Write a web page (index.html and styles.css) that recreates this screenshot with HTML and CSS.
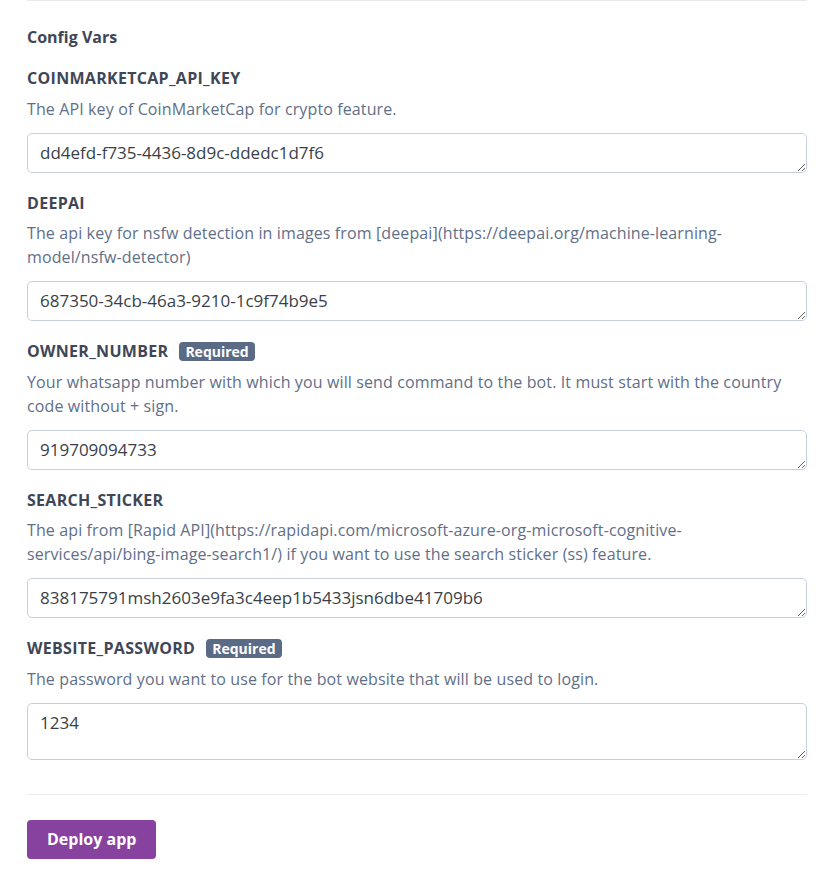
FILE: index.html
```html
<!DOCTYPE html>
<html>
<head>
<meta charset="utf-8">
<link rel="stylesheet" href="styles.css">
</head>
<body>
<div class="page">
  <div class="top-rule"></div>
  <h2 class="section-title">Config Vars</h2>

  <div class="field">
    <div class="label-row"><span class="label">COINMARKETCAP_API_KEY</span></div>
    <p class="desc">The API key of CoinMarketCap for crypto feature.</p>
    <textarea class="input">dd4efd-f735-4436-8d9c-ddedc1d7f6</textarea>
  </div>

  <div class="field">
    <div class="label-row"><span class="label">DEEPAI</span></div>
    <p class="desc">The api key for nsfw detection in images from [deepai](https://deepai.org/machine-learning-model/nsfw-detector)</p>
    <textarea class="input">687350-34cb-46a3-9210-1c9f74b9e5</textarea>
  </div>

  <div class="field">
    <div class="label-row"><span class="label">OWNER_NUMBER</span><span class="badge">Required</span></div>
    <p class="desc">Your whatsapp number with which you will send command to the bot. It must start with the country code without + sign.</p>
    <textarea class="input">919709094733</textarea>
  </div>

  <div class="field">
    <div class="label-row"><span class="label">SEARCH_STICKER</span></div>
    <p class="desc">The api from [Rapid API](https://rapidapi.com/microsoft-azure-org-microsoft-cognitive-services/api/bing-image-search1/) if you want to use the search sticker (ss) feature.</p>
    <textarea class="input">838175791msh2603e9fa3c4eep1b5433jsn6dbe41709b6</textarea>
  </div>

  <div class="field">
    <div class="label-row"><span class="label">WEBSITE_PASSWORD</span><span class="badge">Required</span></div>
    <p class="desc">The password you want to use for the bot website that will be used to login.</p>
    <textarea class="input tall">1234</textarea>
  </div>

  <div class="bottom-rule"></div>
  <button class="deploy">Deploy app</button>
</div>
</body>
</html>
```

FILE: styles.css
```css
* { box-sizing: border-box; }
html, body {
  margin: 0;
  padding: 0;
  background: #ffffff;
}
body {
  font-family: "Open Sans", Lato, sans-serif;
  color: #3f4756;
}
.page {
  width: 780px;
  margin-left: 27px;
  display: flex;
  flex-direction: column;
}
.top-rule {
  height: 1px;
  background: #e6eaf0;
}
.section-title {
  margin: 24px 0 0 0;
  font-size: 16px;
  line-height: 24px;
  font-weight: 700;
  color: #3f4756;
}
.field {
  display: flex;
  flex-direction: column;
  margin-top: 17px;
}
.field + .field { margin-top: 18px; }
.label-row {
  display: flex;
  align-items: center;
  gap: 11px;
  height: 24px;
}
.label {
  font-size: 16px;
  font-weight: 700;
  letter-spacing: 0.3px;
  color: #3f4756;
  line-height: 24px;
}
.badge {
  background: #5b6b86;
  color: #ffffff;
  font-size: 14px;
  font-weight: 700;
  line-height: 19px;
  padding: 0 6px;
  border-radius: 4px;
}
.desc {
  margin: 6.5px 0 12px 0;
  font-size: 16px;
  line-height: 24px;
  letter-spacing: 0.12px;
  color: #5f6f88;
}
.input {
  display: block;
  width: 100%;
  height: 40px;
  border: 1px solid #c8d0e0;
  border-radius: 5px;
  padding: 8px 12px;
  font-family: inherit;
  font-size: 17px;
  line-height: 22px;
  color: #3a3f47;
  background: #ffffff;
  resize: vertical;
  margin: 0;
}
.input.tall { height: 57px; }
.bottom-rule {
  margin-top: 34px;
  height: 1px;
  background: #eceef2;
}
.deploy {
  align-self: flex-start;
  margin-top: 25px;
  height: 39px;
  padding: 0 20px;
  background: #8742a0;
  color: #ffffff;
  border: none;
  border-radius: 4px;
  font-family: inherit;
  font-size: 16px;
  font-weight: 700;
}
```
